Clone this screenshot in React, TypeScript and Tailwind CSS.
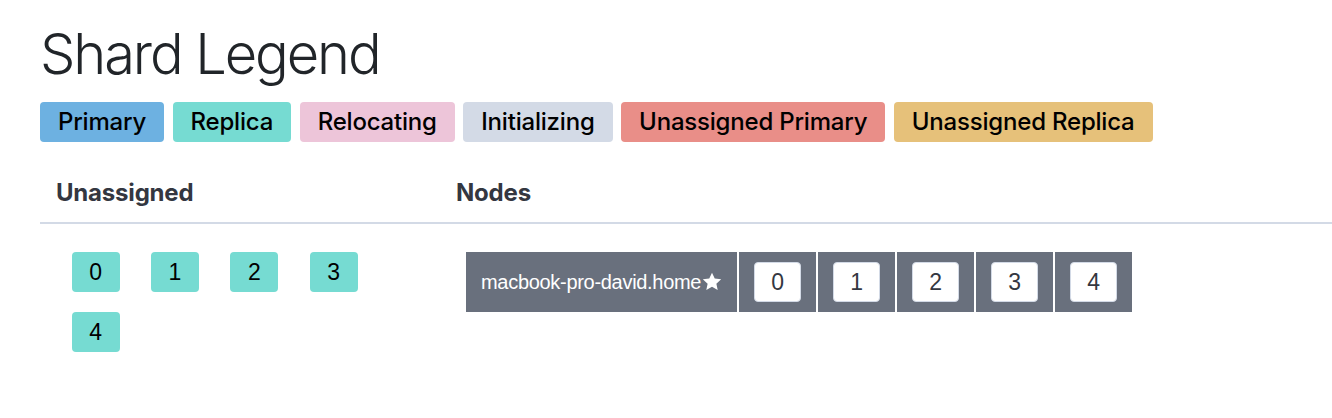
const legend = [
  { label: "Primary", color: "bg-[#6db1e1]" },
  { label: "Replica", color: "bg-[#76dbd2]" },
  { label: "Relocating", color: "bg-[#edc5d9]" },
  { label: "Initializing", color: "bg-[#d3dae6]" },
  { label: "Unassigned Primary", color: "bg-[#e98e88]" },
  { label: "Unassigned Replica", color: "bg-[#e6c17a]" },
];

const shards = [0, 1, 2, 3, 4];

function Star() {
  return (
    <svg width="20" height="19" viewBox="0 0 24 23" className="shrink-0 ml-[1px] mb-[2px]">
      <path
        d="M12 0.8l3.3 7.1 7.8 0.9-5.8 5.3 1.6 7.7L12 17.9l-6.9 3.9 1.6-7.7L0.9 8.8l7.8-0.9z"
        fill="#ffffff"
      />
    </svg>
  );
}

export default function App() {
  return (
    <div className="bg-white w-[1332px] h-[418px] pl-[40px] pt-[21px] font-['Inter',sans-serif]">
      <h1 className="text-[56px] leading-[1.2] font-light text-[#212529] tracking-[-2.1px]">
        Shard Legend
      </h1>

      <div className="flex gap-[8.5px] mt-[14px]">
        {legend.map((l) => (
          <span
            key={l.label}
            className={`${l.color} h-[40px] px-[18px] flex items-center rounded-[4px] text-[24px] font-medium text-black tracking-[-0.2px] whitespace-nowrap`}
          >
            {l.label}
          </span>
        ))}
      </div>

      <div className="mt-[18px]">
        <div className="flex h-[64px] items-center border-b-2 border-[#d3dae6] pt-[3px] text-[24px] font-bold text-[#343741] tracking-[-0.2px]">
          <div className="w-[400px] px-[16px]">Unassigned</div>
          <div className="px-[16px]">Nodes</div>
        </div>

        <div className="flex pt-[18px]">
          <div className="w-[400px] px-[16px] flex flex-wrap">
            {shards.map((s) => (
              <div
                key={s}
                className="w-[48px] h-[40px] my-[10px] mx-[15.67px] rounded-[4px] bg-[#76dbd2] flex items-center justify-center text-[23px] text-black font-['Liberation_Sans',sans-serif]"
              >
                {s}
              </div>
            ))}
          </div>

          <div className="px-[16px]">
            <div className="flex gap-[2px] m-[10px] h-[60px] font-['Liberation_Sans',sans-serif]">
              <div className="bg-[#69707d] px-[15px] flex items-center text-white text-[20px] tracking-[-0.3px] whitespace-nowrap">
                macbook-pro-david.home
                <Star />
              </div>
              {shards.map((s) => (
                <div key={s} className="bg-[#69707d] px-[15px] flex items-center">
                  <div className="w-[47px] h-[40px] bg-white border border-[#d3dae6] rounded-[4px] flex items-center justify-center text-[23px] text-[#343741]">
                    {s}
                  </div>
                </div>
              ))}
            </div>
          </div>
        </div>
      </div>
    </div>
  );
}
